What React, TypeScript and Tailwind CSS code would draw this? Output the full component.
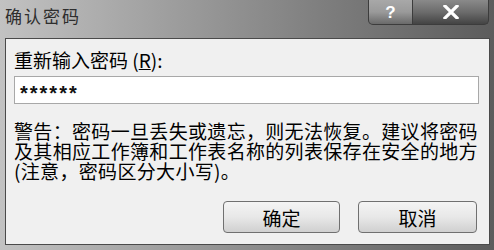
import React from "react";

const cjk = { fontFamily: '"Noto Sans CJK SC", "Noto Sans", sans-serif' };

export default function App() {
  return (
    <div
      className="w-[494px] h-[250px] flex flex-col bg-gradient-to-r from-[#c2c2c2] via-[#8e8e8e] to-[#5c5c5c] overflow-hidden"
      style={cjk}
    >
      {/* Title bar */}
      <div className="h-[38px] flex items-start shrink-0">
        <div className="pl-[5px] pt-[6px] text-[17px] leading-[20px] tracking-[2px] text-[#2e2e2e]">
          确认密码
        </div>
        <div className="ml-auto mr-[5px] flex h-[25px]">
          <div className="w-[45px] h-full rounded-bl-[5px] border border-t-0 border-[#3c3c3c] bg-gradient-to-b from-[#a8a8a8] via-[#9a9a9a] to-[#6a6a6a] flex items-center justify-center text-white font-bold text-[17px] leading-none" style={{ fontFamily: '"Liberation Sans", sans-serif' }}>
            ?
          </div>
          <div className="w-[76px] h-full rounded-br-[5px] border border-t-0 border-l-0 border-[#3c3c3c] bg-gradient-to-b from-[#8a8a8a] via-[#6c6c6c] to-[#444] flex items-center justify-center">
            <svg width="16" height="14" viewBox="0 0 16 14">
              <path d="M2 1 L14 13 M14 1 L2 13" stroke="white" strokeWidth="3.2" strokeLinecap="square" />
            </svg>
          </div>
        </div>
      </div>

      {/* Content */}
      <div className="ml-[5px] mr-[4px] mb-[5px] flex-1 border border-[#4a4a4a] bg-[#f0f0f0] flex flex-col pl-[8px] pr-[12px] pt-[11px]">
        <div className="text-[19px] leading-[20px] text-black">
          重新输入密码 (<span className="underline">R</span>):
        </div>
        <div className="mt-[6px] h-[28px] w-[465px] border border-[#a8a8a8] bg-white flex items-center pl-[5px] pt-[6px]">
          <span className="text-[20px] font-bold tracking-[2px] text-[#111] leading-none" style={{ fontFamily: '"Liberation Sans", sans-serif' }}>
            ******
          </span>
        </div>
        <div className="mt-[17px] text-[19px] leading-[20px] tracking-[0.33px] text-black whitespace-nowrap">
          <div>警告：密码一旦丢失或遗忘，则无法恢复。建议将密码</div>
          <div>及其相应工作簿和工作表名称的列表保存在安全的地方</div>
          <div>(注意，密码区分大小写)。</div>
        </div>
        <div className="mt-[20px] flex justify-end gap-[18px]">
          <button className="w-[117px] h-[32px] rounded-[4px] border border-[#707070] bg-gradient-to-b from-[#f4f4f4] via-[#e8e8e8] to-[#d0d0d0] text-[19px] leading-none text-black" style={cjk}>
            确定
          </button>
          <button className="w-[119px] h-[32px] rounded-[4px] border border-[#707070] bg-gradient-to-b from-[#f4f4f4] via-[#e8e8e8] to-[#d0d0d0] text-[19px] leading-none text-black" style={cjk}>
            取消
          </button>
        </div>
      </div>
    </div>
  );
}
